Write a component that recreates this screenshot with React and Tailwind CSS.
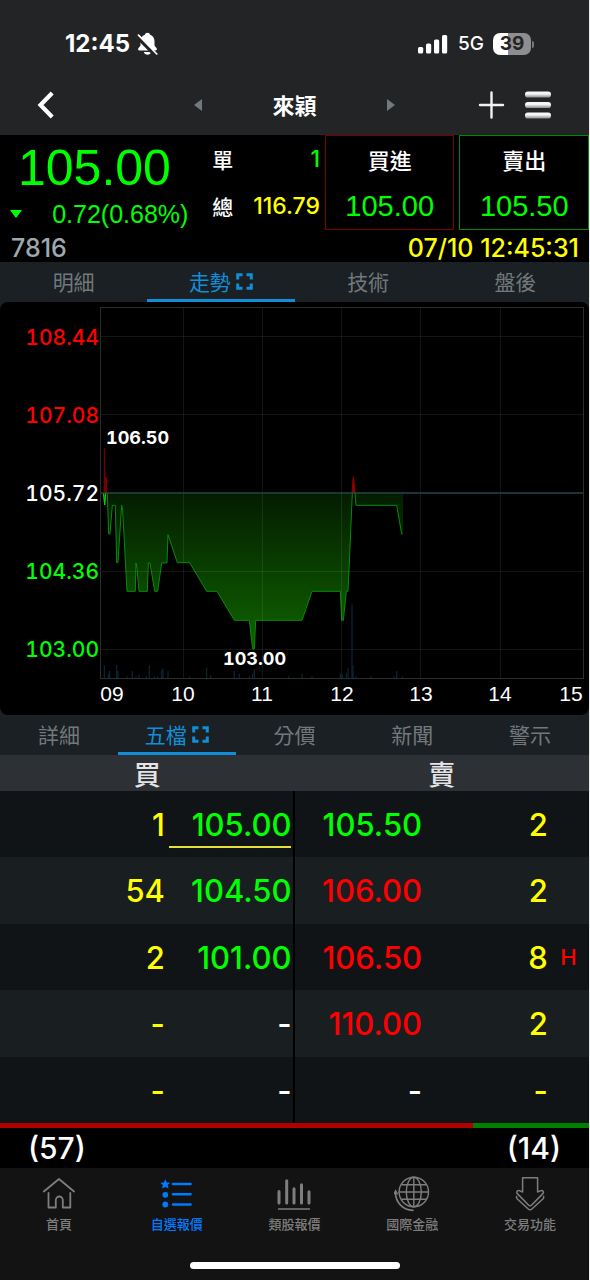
import React from "react";

const NUM = "font-['Inter',sans-serif] font-medium";
const HELV = "font-['Liberation_Sans',Arial,sans-serif]";
const CJK = "font-['Noto_Sans_CJK_TC',sans-serif]";

function StatusBar() {
  return (
    <div className="flex h-[88px] items-center justify-between pl-[65px] pr-[55px]">
      <div className="flex items-center gap-[7px]">
        <span className="font-['Inter',sans-serif] text-2xl font-bold text-white">12:45</span>
        <svg className="h-6 w-[21px]" viewBox="0 0 20 24" fill="white" aria-hidden="true">
          <path d="M10 0.800c-1.400 0-2.400.9-2.600 2C4.500 3.900 3 6.400 3 9.400v4L.9 16.200c-.7 1-.2 2.200 1.100 2.200h16c1.300 0 1.800-1.200 1.100-2.200L17 13.400v-4c0-3-1.500-5.500-4.400-6.600-.2-1.100-1.200-2-2.600-2Z" />
          <path d="M6.300 20h7.400c-.5 1.700-1.900 2.800-3.700 2.800S6.800 21.700 6.300 20Z" />
          <path d="M-.5 4.800 18 23.500" stroke="#232426" strokeWidth="3.600" />
          <path d="M1 3.200 19.300 22" stroke="white" strokeWidth="1.700" strokeLinecap="round" />
        </svg>
      </div>
      <div className="flex items-center gap-[9px]">
        <svg className="h-5 w-[31px]" viewBox="0 0 31 20" fill="white" aria-hidden="true">
          <rect x="0" y="13" width="5.200" height="6.500" rx="1.500" />
          <rect x="8" y="9.500" width="5.200" height="10" rx="1.500" />
          <rect x="16" y="5.500" width="5.200" height="14" rx="1.500" />
          <rect x="24" y="1" width="5.200" height="18.500" rx="1.500" />
        </svg>
        <span className="font-['Inter',sans-serif] text-[19px] font-medium text-white">5G</span>
        <div className="flex items-center gap-px">
          <div className="flex h-[22px] w-[38px] items-center justify-center rounded-[7px] bg-linear-to-r from-white from-39% to-[#8e8e90] to-39%">
            <span className="font-['Inter',sans-serif] text-[19px] font-bold text-[#232426]">39</span>
          </div>
          <div className="h-[7px] w-[2px] rounded-r-full bg-[#77787a]" />
        </div>
      </div>
    </div>
  );
}

function TitleBar() {
  return (
    <header className="grid h-[47px] grid-cols-[1fr_auto_1fr] items-center pb-[13px]">
      <button type="button" aria-label="返回" className="ml-[37px] w-fit">
        <svg className="h-7 w-[17px]" viewBox="0 0 17 28" fill="none" stroke="white" strokeWidth="4.200" aria-hidden="true">
          <path d="M15.200 2 3.500 14l11.700 12" />
        </svg>
      </button>
      <div className="flex items-center gap-[70px]">
        <button type="button" aria-label="上一檔">
          <svg className="h-3 w-2" viewBox="0 0 8 12" fill="#6f797e" aria-hidden="true"><path d="M8 0v12L0 6Z" /></svg>
        </button>
        <h1 className={`${CJK} pb-[2px] text-[22px] leading-none font-bold text-white`}>來穎</h1>
        <button type="button" aria-label="下一檔">
          <svg className="h-3 w-2" viewBox="0 0 8 12" fill="#6f797e" aria-hidden="true"><path d="M0 0v12l8-6Z" /></svg>
        </button>
      </div>
      <div className="mr-[37px] flex items-center justify-end gap-[19px]">
        <button type="button" aria-label="新增">
          <svg className="h-7 w-[27px]" viewBox="0 0 27 28" stroke="#f2f2f2" strokeWidth="2.400" strokeLinecap="round" aria-hidden="true">
            <path d="M13.500 1.500v25M2 14h23" />
          </svg>
        </button>
        <button type="button" aria-label="選單">
          <svg className="h-7 w-7" viewBox="0 0 28 28" aria-hidden="true">
            <defs>
              <linearGradient id="bar" x2="0" y2="1">
                <stop offset="0.400" stopColor="#f6f6f6" />
                <stop offset="1" stopColor="#8a8a8a" />
              </linearGradient>
            </defs>
            <rect x="1" y="0.500" width="26" height="6" rx="2.800" fill="url(#bar)" />
            <rect x="1" y="11" width="26" height="6" rx="2.800" fill="url(#bar)" />
            <rect x="1" y="21.500" width="26" height="6" rx="2.800" fill="url(#bar)" />
          </svg>
        </button>
      </div>
    </header>
  );
}

function Quote() {
  return (
    <section className="bg-black">
      <div className="flex h-[95px]">
        <div className="flex w-[33%] flex-col pr-[6px] pl-[10px]">
          <div className={`${HELV} pt-[3px] pl-2 text-[50px] leading-[60px] text-[#00ff00]`}>105.00</div>
          <div className="flex items-center justify-between">
            <svg className="h-2 w-3" viewBox="0 0 12 8" fill="#00ff00" aria-hidden="true"><path d="M0 0h12L6 8Z" /></svg>
            <span className={`${HELV} text-[25px] leading-[32px] text-[#00ff00]`}>0.72(0.68%)</span>
          </div>
        </div>
        <dl className="flex flex-1 flex-col pr-1 pl-[18px]">
          <div className="flex h-12 items-center justify-between">
            <dt className={`${CJK} text-[21px] leading-none font-medium text-white`}>單</dt>
            <dd className={`${NUM} text-[23px] text-[#00ff00]`}>1</dd>
          </div>
          <div className="flex h-[47px] items-center justify-between">
            <dt className={`${CJK} text-[21px] leading-none font-medium text-white`}>總</dt>
            <dd className={`${NUM} text-[23px] text-[#ffff00]`}>116.79</dd>
          </div>
        </dl>
        <div className="flex w-[45%] gap-[5px] pl-px">
          <button type="button" className="flex flex-1 flex-col items-center border border-[#7c0000]">
            <span className={`${CJK} text-[22px] leading-[46px] font-medium text-white`}>買進</span>
            <span className={`${HELV} text-[29px] leading-[48px] text-[#00ff00]`}>105.00</span>
          </button>
          <button type="button" className="flex flex-1 flex-col items-center border border-[#008a00]">
            <span className={`${CJK} text-[22px] leading-[46px] font-medium text-white`}>賣出</span>
            <span className={`${HELV} text-[29px] leading-[48px] text-[#00ff00]`}>105.50</span>
          </button>
        </div>
      </div>
      <div className={`${NUM} flex h-8 items-end justify-between pr-[10px] pl-[11px] text-[25px] leading-[28px]`}>
        <span className="text-[#9ea9af]">7816</span>
        <span className="text-[#ffff00]">07/10 12:45:31</span>
      </div>
    </section>
  );
}

function Tabs({ items, active }) {
  return (
    <nav className="flex h-10 bg-[#1a2023]">
      {items.map((label) => {
        const on = label === active;
        return (
          <button
            key={label}
            type="button"
            aria-pressed={on}
            className={`${CJK} flex flex-1 items-center justify-center gap-[5px] border-t border-b-[3px] border-t-transparent text-[21px] leading-none ${
              on ? "border-b-[#108fd8] text-[#108fd8]" : "border-b-transparent text-[#72787b]"
            }`}
          >
            {label}
            {on && (
              <svg className="size-[17px]" viewBox="0 0 17 17" fill="none" stroke="currentColor" strokeWidth="3" aria-hidden="true">
                <path d="M6.500 1.700H1.700v4.800M10.500 1.700h4.800v4.800M6.500 15.300H1.700v-4.800M10.500 15.300h4.800v-4.800" />
              </svg>
            )}
          </button>
        );
      })}
    </nav>
  );
}

// Trend points and volume bars share one coordinate system: 3 units per chart pixel.
const BASE = 69;
const trend = [
  [40, 69], [44, 105], [47, 69], [52, 69], [56, 192], [60, 192], [67, 106], [76, 106], [80, 278], [84, 278],
  [95, 106], [98, 122], [111, 364], [136, 364], [138, 279], [141, 295], [147, 364], [172, 364], [175, 279],
  [180, 279], [194, 364], [203, 364], [215, 279], [231, 279], [234, 194], [262, 278], [299, 278], [350, 364],
  [381, 364], [433, 451], [478, 451], [488, 537], [493, 537], [497, 451], [636, 451], [666, 364], [751, 364],
  [755, 451], [760, 451], [769, 364], [774, 364], [778, 279], [787, 69], [795, 69], [798, 106], [920, 106],
  [935, 192], [938, 192],
];
const volume = [
  [43, 586], [55, 611], [59, 603], [80, 586], [84, 603], [111, 619], [127, 603], [138, 619], [147, 614],
  [169, 619], [178, 586], [194, 619], [203, 619], [215, 600], [219, 595], [234, 603], [299, 619], [350, 592],
  [362, 616], [433, 603], [448, 611], [478, 619], [488, 611], [493, 598], [596, 619], [636, 611], [666, 619],
  [751, 609], [757, 614], [769, 609], [774, 595], [786, 403], [789, 586], [798, 619], [842, 619], [912, 619],
  [920, 603], [937, 619],
];
const prices = [
  ["108.44", 35, "#ff0000"],
  ["107.08", 113, "#ff0000"],
  ["105.72", 191, "#ffffff"],
  ["104.36", 269, "#00ff00"],
  ["103.00", 347, "#00ff00"],
];
const hours = [
  ["09", 112], ["10", 183], ["11", 262], ["12", 342], ["13", 421], ["14", 500], ["15", 571],
];

function Chart() {
  const line = trend.map((p) => p.join(",")).join(" ");
  return (
    <section className="bg-[#1a2023]">
      <svg className="block w-full rounded-lg bg-black" viewBox="0 0 589 413" role="img" aria-label="走勢圖">
        <defs>
          <linearGradient id="area" gradientUnits="userSpaceOnUse" x1="0" y1="69" x2="0" y2="537">
            <stop offset="0" stopColor="#031c00" />
            <stop offset="1" stopColor="#0f6400" />
          </linearGradient>
        </defs>
        <g transform="translate(90 168) scale(0.33333)">
          <polygon points={`40,${BASE} ${line} 940,${BASE}`} fill="url(#area)" />
          <polyline points={line} fill="none" stroke="#0a8a0a" strokeWidth="3" />
          <path d="M41 69 44 105 47 69" fill="none" stroke="#00e000" strokeWidth="3" />
          <path d="M43 69V-65M47 69V22H50V69" fill="none" stroke="#8c0000" strokeWidth="3" />
          <path d="M786 69 789 22H791L796 69Z" fill="#8c0000" stroke="#a00000" strokeWidth="2" />
          {volume.map(([x, y]) => (
            <path key={x} d={`M${x} 626V${y}`} stroke="#08293a" strokeWidth="3.500" />
          ))}
        </g>
        <g fill="none" stroke="#ffffff" strokeOpacity="0.08">
          {[183, 262, 341, 420, 500].map((x) => (
            <path key={x} d={`M${x}.5 5V377`} />
          ))}
          {[34, 112, 269, 347].map((y) => (
            <path key={y} d={`M101 ${y}.5H583`} />
          ))}
        </g>
        <rect x="100.500" y="5.500" width="483" height="371" fill="none" stroke="#2c2c2c" />
        <path d="M101 191H583" stroke="#22474d" strokeWidth="1.500" />
        {prices.map(([t, y, c]) => (
          <text key={t} x="99" y={y + 8} textAnchor="end" fill={c} className={`${NUM} text-[21px] tabular-nums`}>
            {t}
          </text>
        ))}
        {hours.map(([t, x]) => (
          <text key={t} x={x} y="399" textAnchor="middle" fill="#ffffff" className={`${HELV} text-[21px]`}>
            {t}
          </text>
        ))}
        <g fill="#ffffff" className="font-['Inter',sans-serif] text-[18px] font-bold tabular-nums">
          <text x="106" y="142">106.50</text>
          <text x="223" y="363">103.00</text>
        </g>
      </svg>
    </section>
  );
}

const G = "text-[#00ff00]";
const R = "text-[#ff0000]";
const W = "text-white";
const book = [
  ["1", "105.00", G, "105.50", G, "2", ""],
  ["54", "104.50", G, "106.00", R, "2", ""],
  ["2", "101.00", G, "106.50", R, "8", "H"],
  ["-", "-", W, "110.00", R, "2", ""],
  ["-", "-", W, "-", W, "-", ""],
];

function OrderBook() {
  return (
    <section>
      <table className={`${NUM} w-full table-fixed border-collapse text-[31px] leading-none`}>
        <colgroup>
          <col className="w-[28%]" />
          <col className="w-[22%]" />
          <col className="w-[22%]" />
          <col className="w-[21%]" />
          <col className="w-[7%]" />
        </colgroup>
        <thead className={`${CJK} bg-[#2d3135] text-[27px] leading-none text-[#e4e4e6]`}>
          <tr className="h-9">
            <th colSpan="2" className="p-0 font-medium">買</th>
            <th colSpan="3" className="p-0 font-medium">賣</th>
          </tr>
        </thead>
        <tbody>
          {book.map(([bq, bp, bc, sp, sc, sq, flag], i) => (
            <tr key={i} className="odd:h-[66px] even:h-[67px] odd:bg-[#111417] even:bg-[#191e20]">
              <td className="p-0 text-right text-[#ffff00]">{bq}</td>
              <td className={`border-r-2 border-black p-0 pr-[2px] pl-1 text-right ${bc}`}>
                <div className={`border-y-2 border-t-transparent py-[6px] ${i === 0 ? "border-b-[#e6e03c]" : "border-b-transparent"}`}>
                  {bp}
                </div>
              </td>
              <td className={`p-0 pr-[2px] text-right ${sc}`}>{sp}</td>
              <td className="p-0 text-right text-[#ffff00]">{sq}</td>
              <td className="p-0 text-center text-[22px] text-[#ff0000]">{flag}</td>
            </tr>
          ))}
        </tbody>
      </table>
      <div className="flex h-[5px]">
        <div className="flex-[57] bg-[#b00000]" />
        <div className="flex-[14] bg-[#008000]" />
      </div>
      <div className={`${NUM} flex h-10 items-center justify-between bg-black px-[28px] text-[30px] leading-none text-white`}>
        <span>(57)</span>
        <span>(14)</span>
      </div>
    </section>
  );
}

const icons = {
  首頁: (
    <g fill="none" stroke="currentColor" strokeWidth="1.800" strokeLinecap="round" strokeLinejoin="round">
      <path d="M2.800 15.500 18 3l15 12.500" />
      <path d="M7.500 17V31.500h7.300V24a3.500 3.500 0 0 1 7 0v7.500h7.500V17" />
    </g>
  ),
  自選報價: (
    <g fill="currentColor">
      <path d="m6.300 3.300 1.500 3.100 3.500.4-2.600 2.300.8 3.500-3.200-1.700-3.200 1.700.8-3.500-2.600-2.300 3.500-.4Z" />
      <circle cx="6.300" cy="18.800" r="2.900" />
      <circle cx="6.300" cy="28.500" r="2.900" />
      <path d="M14 8h17.500M14 18.300h17.500M14 28.500h17.500" stroke="currentColor" strokeWidth="2.600" strokeLinecap="round" />
    </g>
  ),
  類股報價: (
    <g stroke="currentColor" strokeLinecap="round" strokeWidth="3">
      <path d="M3 15.500v11.500M10.700 4.700v22.300M18 12.800v14.200M25.500 8.800v18.200M33 15.800v11.200" />
      <path d="M2.500 33h31" strokeWidth="1.400" />
    </g>
  ),
  國際金融: (
    <g fill="none" stroke="currentColor" strokeWidth="1.400" strokeLinecap="round">
      <circle cx="19.800" cy="16" r="14.700" />
      <ellipse cx="19.800" cy="16" rx="7.500" ry="14.700" />
      <path d="M19.800 1.300v29.400M5.100 16h29.400M8 8.700h23.600M8 23.300h23.600" />
      <path d="M1.500 16.500C1.500 26.500 9 34 19 34.300" strokeWidth="1.700" />
      <path d="m.3 17.700 1.300-2.700 1.600 2.700" strokeWidth="1.600" />
    </g>
  ),
  交易功能: (
    <g fill="none" stroke="currentColor" strokeWidth="1.500" strokeLinejoin="round">
      <path d="M10.600 1.700h15v14.300l3.300-1.400c1.800-.6 3.200 1.300 2.200 2.800L19.700 29c-.9.900-2.300.9-3.200 0L5.100 17.400c-1-1.500.4-3.400 2.200-2.800l3.300 1.400Z" />
      <path d="M4.800 19.800c-.6 1-.5 2 .3 2.900l11.200 10.300c1 .9 2.600.9 3.600 0l11.200-10.300c.8-.9.900-1.900.3-2.900" />
    </g>
  ),
};

function BottomNav() {
  return (
    <footer className="flex h-28 flex-col justify-between bg-[#131313] pb-[11px]">
      <nav className="flex pt-2">
        {Object.entries(icons).map(([label, icon]) => (
          <a
            key={label}
            href="#"
            className={`flex flex-1 flex-col items-center gap-1 ${label === "自選報價" ? "text-[#007aff]" : "text-[#7e7e7e]"}`}
          >
            <svg className="size-9" viewBox="0 0 36 36" aria-hidden="true">{icon}</svg>
            <span className={`${CJK} text-[13px] leading-4 font-medium`}>{label}</span>
          </a>
        ))}
      </nav>
      <div className="mx-auto h-[7px] w-[210px] rounded-full bg-white" />
    </footer>
  );
}

export default function App() {
  return (
    <div className="min-h-screen border-r border-[#ececec] bg-[#131313]">
      <div className="bg-[#232426]">
        <StatusBar />
        <TitleBar />
      </div>
      <main>
        <Quote />
        <Tabs items={["明細", "走勢", "技術", "盤後"]} active="走勢" />
        <Chart />
        <Tabs items={["詳細", "五檔", "分價", "新聞", "警示"]} active="五檔" />
        <OrderBook />
      </main>
      <BottomNav />
    </div>
  );
}
